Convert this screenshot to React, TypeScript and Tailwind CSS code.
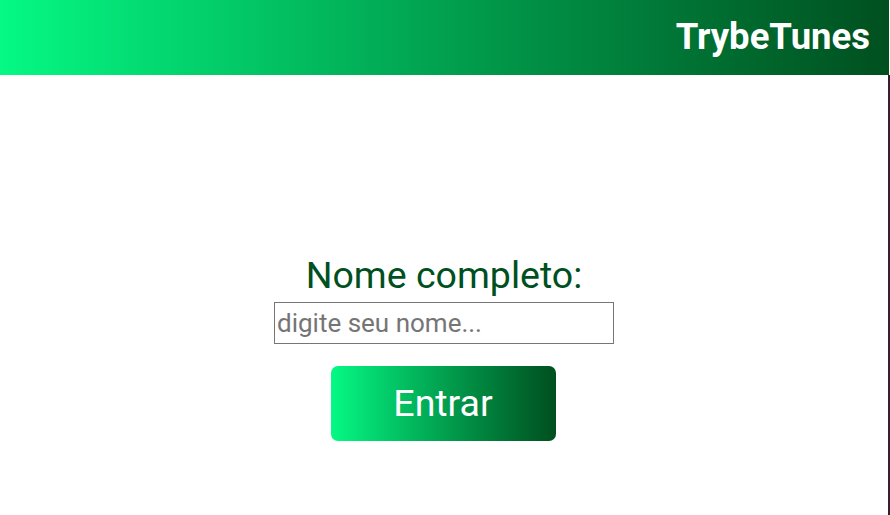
export default function App() {
  return (
    <div className="h-[515px] w-[890px] overflow-hidden bg-white font-['Roboto',sans-serif]">
      <header className="flex h-[75px] w-[889px] items-center justify-end bg-gradient-to-r from-[#05f984] to-[#00501f] pr-[19px]">
        <h1 className="text-[36.5px] font-bold leading-none text-white">TrybeTunes</h1>
      </header>
      <main className="flex h-[440px] w-[890px] flex-col items-center border-r-2 border-[#3b1d30] pt-[178px]">
        <label htmlFor="name" className="text-[37.5px] leading-[44px] text-[#00501f]">
          Nome completo:
        </label>
        <input
          id="name"
          type="text"
          placeholder="digite seu nome..."
          className="mt-[5px] h-[42px] w-[340px] border border-[#767676] px-[2px] text-[26px] text-black outline-none placeholder:text-[#757575]"
        />
        <button
          type="button"
          className="-ml-[2px] mt-[22px] h-[75px] w-[225px] rounded-[7px] bg-gradient-to-r from-[#05f984] to-[#00501f] text-[37.5px] text-white"
        >
          Entrar
        </button>
      </main>
    </div>
  );
}
